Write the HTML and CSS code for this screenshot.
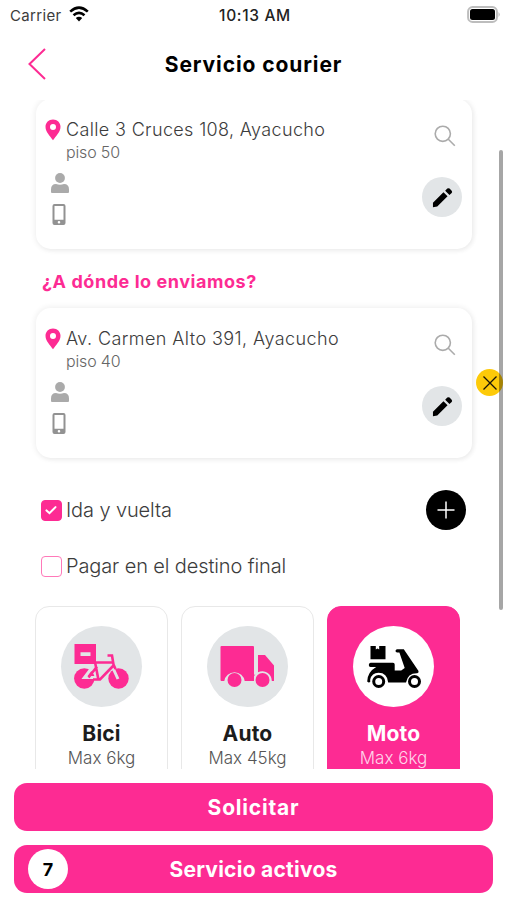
FILE: index.html
```html
<!DOCTYPE html>
<html lang="es">
<head>
<meta charset="utf-8">
<title>Servicio courier</title>
<link rel="stylesheet" href="styles.css">
</head>
<body>
<svg class="defs" aria-hidden="true">
  <symbol id="pin" viewBox="0 0 16 22"><path fill-rule="evenodd" d="M8 .5C3.700.5.500 3.700.500 7.800.500 13 5 17 8 21.300 11 17 15.500 13 15.500 7.800 15.500 3.700 12.300.500 8 .500ZM8 5a3 3 0 1 1 0 6 3 3 0 0 1 0-6Z"/></symbol>
  <symbol id="person" viewBox="0 0 18 20"><circle cx="9" cy="5" r="4.900"/><path d="M0 19v-2.500Q0 11 5 11q4 1.500 8 0 5 0 5 5.500V19q0 1-1 1H1q-1 0-1-1Z"/></symbol>
  <symbol id="phone" viewBox="0 0 14 21"><path fill-rule="evenodd" d="M2.500 0h9Q13.500 0 13.500 2v17q0 2-2 2h-9q-2 0-2-2V2q0-2 2-2ZM2.500 2v13.700h9V2ZM7 17a1.300 1.300 0 1 0 0 2.600A1.300 1.300 0 0 0 7 17Z"/></symbol>
  <symbol id="search" viewBox="0 0 22 22"><circle cx="8.800" cy="8.800" r="7.600"/><path d="m14.300 14.300 6.500 6.500"/></symbol>
  <symbol id="pencil" viewBox="0 0 22 22"><path d="M1 16.500 12 5.500l4.300 4.300L5.500 20.500 1 21.300ZM13.800 3.900l2.200-2.200q1.200-1 2.400 0l2.200 2.200q1 1.200 0 2.400l-2.300 2.200Z"/></symbol>
</svg>
<main class="screen">
  <div class="status">
    <div class="carrier"><span class="carrier-name">Carrier</span>
      <svg class="wifi" viewBox="0 0 20 16"><path d="M1.200 5.600Q10-2.200 18.800 5.600M4.500 9.200q5.500-4.800 11 0"/><path class="solid" d="M6.800 12q3.200-2.600 6.400 0L10 15.600Z"/></svg>
    </div>
    <span class="time">10:13 AM</span>
    <svg class="battery" viewBox="0 0 34 18"><rect class="shell" x="2.100" y="1.100" width="28.800" height="14.800" rx="4.500"/><rect x="4" y="3" width="25" height="11" rx="2.500"/><path class="tip" d="M32.500 6q2.500 2.500 0 5Z"/></svg>
  </div>
  <header class="header">
    <svg class="back" viewBox="0 0 18 32"><path d="M17 1 1.500 16 17 31"/></svg>
    <h1 class="title">Servicio courier</h1>
  </header>
  <section class="content">
    <article class="card">
      <div class="details">
        <div class="address"><svg class="pin"><use href="#pin"/></svg><span class="street">Calle 3 Cruces 108, Ayacucho</span></div>
        <span class="floor">piso 50</span>
        <svg class="person"><use href="#person"/></svg>
        <svg class="phone"><use href="#phone"/></svg>
      </div>
      <div class="actions"><svg class="search"><use href="#search"/></svg><span class="edit"><svg class="pencil"><use href="#pencil"/></svg></span></div>
    </article>
    <h2 class="question">¿A dónde lo enviamos?</h2>
    <article class="card">
      <div class="details">
        <div class="address"><svg class="pin"><use href="#pin"/></svg><span class="street second">Av. Carmen Alto 391, Ayacucho</span></div>
        <span class="floor">piso 40</span>
        <svg class="person"><use href="#person"/></svg>
        <svg class="phone"><use href="#phone"/></svg>
      </div>
      <div class="actions"><svg class="search"><use href="#search"/></svg><span class="edit"><svg class="pencil"><use href="#pencil"/></svg></span></div>
    </article>
    <div class="option first">
      <span class="box checked"><svg viewBox="0 0 20 20"><path d="m5 10.500 3.300 3L15 6.800"/></svg></span>
      <span class="label">Ida y vuelta</span>
      <span class="add"><svg viewBox="0 0 18 18"><path d="M9 .5v17M.5 9h17"/></svg></span>
    </div>
    <div class="option">
      <span class="box"></span><span class="label">Pagar en el destino final</span>
    </div>
    <div class="vehicles">
      <div class="vehicle">
        <span class="disc"><svg viewBox="0 0 81 81">
          <path fill-rule="evenodd" d="M13.500 18H35v20H13.500Zm6 8.200v3.800h10v-3.800Z"/>
          <circle cx="23.300" cy="52.500" r="10.200"/><circle cx="57.500" cy="52.500" r="10.200"/>
          <path class="gap" d="M33 39 23.500 51.500H34M51.500 41l5.500 12"/>
          <path class="frame" d="M33 36.500h19M34 36l3.200 16.500M32 53.500h7L53 39M36 40.500l-8.500 11M46.500 29.500h4.500l1.500 9 2 4.500"/>
        </svg></span>
        <strong class="name">Bici</strong><span class="load">Max 6kg</span>
      </div>
      <div class="vehicle">
        <span class="disc"><svg viewBox="0 0 81 81">
          <path d="M14.500 20H46q1 0 1 1v34h-9.300a10.300 10.300 0 0 0-20.400 0h-2.800q-1 0-1-1V21q0-1 1-1ZM51 29h7l9 10.500V55h-2.200a9.600 9.600 0 0 0-13.800-8.800Z"/>
          <circle cx="27.500" cy="54" r="7"/><circle cx="55.500" cy="54" r="7"/><path d="M47 49v6h-1.500q0-4 3-7Z"/>
        </svg></span>
        <strong class="name">Auto</strong><span class="load">Max 45kg</span>
      </div>
      <div class="vehicle selected">
        <span class="disc"><svg viewBox="0 0 81 81">
          <path d="M17.500 20h5.300v3.600l1.700-1.100 1.700 1.100V20H32.500v13.200h-15Z"/>
          <path d="M17.500 36.700h22.500q1.700 0 1.700 1.700v6.100h6.500l3.500-2.500-5.300-15.500h-2.200q-1.700-.3-1.700-1.600t1.700-1.600h6.600L65.500 45q.5 2-1.300 2.200-9.500-.2-11.200 9.300H35.200q-1-9.700-9.700-9.700-6.800.3-8.300 6.700v2.500q-1.600 1-3-.5.200-9.500 9-14.500h-5.700q-1.700-.3-1.700-2.100t1.700-2.200Z"/>
          <g class="wheel"><circle cx="25.700" cy="55.500" r="5"/><circle cx="61.500" cy="55.500" r="5"/></g>
        </svg></span>
        <strong class="name">Moto</strong><span class="load">Max 6kg</span>
      </div>
    </div>
  </section>
  <footer class="footer">
    <div class="button request">Solicitar</div>
    <div class="button active">Servicio activos<span class="count">7</span></div>
  </footer>
  <span class="close"><svg viewBox="0 0 14 14"><path d="m.5.5 13 13M13.500.5l-13 13"/></svg></span>
  <span class="scrollbar"></span>
</main>
</body>
</html>
```
FILE: styles.css
```css
* { box-sizing: border-box; }
body { margin: 0; background: #fff; color: #3c3c3c; font-family: Inter, "Liberation Sans", sans-serif; }
svg { display: block; flex: none; }
.defs { position: absolute; width: 0; height: 0; }
.screen { position: relative; width: 507px; height: 900px; overflow: hidden; display: flex; flex-direction: column; }
.status { height: 30px; flex: none; display: grid; grid-template-columns: 1fr auto 1fr; align-items: center; padding: 0 7px 0 10px; }
.carrier { display: flex; align-items: center; gap: 7px; }
.carrier-name { font-size: 15px; letter-spacing: .35px; }
.wifi { width: 20px; height: 16px; margin-top: -2px; fill: none; stroke: #000; stroke-width: 2.600; }
.wifi .solid { fill: #000; stroke: none; }
.time { font-size: 15.500px; font-weight: 500; color: #222; letter-spacing: .65px; }
.battery { width: 34px; height: 18px; justify-self: end; margin-top: -1px; }
.battery .shell { fill: none; stroke: #bdbdbd; stroke-width: 2; }
.battery .tip { fill: #bdbdbd; }
.header { height: 70px; flex: none; display: grid; grid-template-columns: 1fr auto 1fr; align-items: start; padding: 18px 0 0 28px; }
.back { width: 18px; height: 32px; fill: none; stroke: #fd2b93; stroke-width: 2; }
.title { margin: 2px 28px 0 0; font-size: 21px; line-height: 30px; font-weight: 700; color: #000; letter-spacing: .9px; }
.content { height: 669px; flex: none; overflow: hidden; padding: 0 35px 0 36px; }
.card { display: flex; justify-content: space-between; height: 150px; margin-top: -1px; padding: 18px 10px 0 9px; border-radius: 15px; box-shadow: 0 0 5px 2px #0000000d, 2px 2px 4px #00000008; }
.details { display: flex; flex-direction: column; align-items: flex-start; }
.address { height: 25px; display: flex; align-items: center; gap: 5px; }
.pin { width: 16px; height: 22px; fill: #fd2b93; }
.street { font-size: 18px; line-height: 25px; font-weight: 300; letter-spacing: .35px; white-space: nowrap; }
.second { letter-spacing: .42px; }
.floor { margin-left: 21px; font-size: 16px; line-height: 20px; font-weight: 300; color: #666; letter-spacing: -.15px; }
.person { width: 18px; height: 20px; margin: 11px 0 0 6px; fill: #aaa; }
.phone { width: 14px; height: 21px; margin: 11px 0 0 7px; fill: #929292; }
.actions { display: flex; flex-direction: column; align-items: center; width: 40px; }
.search { width: 22px; height: 22px; margin: 8px 0 0 5px; fill: none; stroke: #ababab; stroke-width: 1.600; }
.edit { width: 40px; height: 40px; margin-top: 30px; border-radius: 50%; background: #e2e5e7; display: grid; place-items: center; }
.pencil { width: 21px; height: 21px; fill: #000; }
.question { margin: 18px 0 0 6px; height: 42px; font-size: 18px; line-height: 30px; font-weight: 700; color: #fd2b93; letter-spacing: .55px; white-space: nowrap; }
.option { height: 56px; display: flex; align-items: center; padding: 0 6px 0 5px; }
.option.first { margin-top: 24px; }
.box { width: 21px; height: 21px; flex: none; border: 1.500px solid #ff79b9; border-radius: 4px; }
.checked { background: #fd2b93; border-color: #fd2b93; }
.checked svg { width: 18px; height: 18px; fill: none; stroke: #fff; stroke-width: 2.300; stroke-linecap: round; }
.label { margin-left: 4px; font-size: 20px; line-height: 26px; font-weight: 300; letter-spacing: -.12px; white-space: nowrap; }
.add { width: 40px; height: 40px; margin-left: auto; border-radius: 50%; background: #000; display: grid; place-items: center; }
.add svg { width: 18px; height: 18px; stroke: #fff; stroke-width: 1.500; }
.vehicles { display: grid; grid-template-columns: repeat(3, 1fr); gap: 13px; margin: 12px 12px 0 -1px; }
.vehicle { height: 180px; padding-top: 19px; display: flex; flex-direction: column; align-items: center; border: 1.500px solid #e8e8e8; border-radius: 14px; }
.disc { width: 81px; height: 81px; border-radius: 50%; background: #e2e5e7; color: #fd2b93; }
.disc svg { width: 81px; height: 81px; fill: currentColor; }
.gap { fill: none; stroke: #e2e5e7; stroke-width: 3; }
.frame { fill: none; stroke: currentColor; stroke-width: 2.600; }
.name { margin-top: 13px; font-size: 21px; line-height: 28px; font-weight: 700; color: #1c1c1c; letter-spacing: .2px; }
.load { font-size: 17px; line-height: 20px; font-weight: 300; color: #555; }
.selected { background: #fd2b93; border-color: #fd2b93; }
.selected .disc { background: #fff; color: #000; }
.selected .name { color: #fff; }
.selected .load { color: #ffd5ea; }
.wheel { fill: #fff; stroke: #000; stroke-width: 3; }
.footer { padding: 14px 14px 0; display: flex; flex-direction: column; gap: 14px; }
.button { position: relative; height: 48px; border-radius: 13px; background: #fd2b93; color: #fff; display: flex; align-items: center; justify-content: center; font-size: 21px; font-weight: 700; }
.request { letter-spacing: .8px; }
.active { letter-spacing: .25px; }
.count { position: absolute; left: 14px; top: 4px; width: 40px; height: 40px; border-radius: 50%; background: #fff; color: #000; display: grid; place-items: center; font-size: 18px; }
.close { position: absolute; left: 476px; top: 369px; width: 27px; height: 27px; border-radius: 50%; background: #fdca09; display: grid; place-items: center; }
.close svg { width: 14px; height: 14px; stroke: #17140a; stroke-width: 1.300; }
.scrollbar { position: absolute; left: 499px; top: 150px; width: 4px; height: 460px; border-radius: 2px; background: #00000059; }
```
